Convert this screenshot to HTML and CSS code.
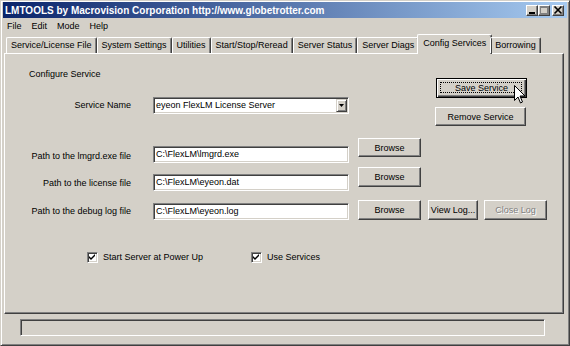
FILE: index.html
```html
<!DOCTYPE html>
<html>
<head>
  <title>LMTOOLS</title>
  <link rel="stylesheet" href="styles.css">
</head>
<body>
  <div class="window">
    <div class="titlebar">
      <span class="title">LMTOOLS by Macrovision Corporation http://www.globetrotter.com</span>
      <div class="caption-btns">
        <span class="cap-btn"><svg width="10" height="9" viewBox="0 0 10 9"><rect x="2" y="6" width="6" height="2" fill="#000"/></svg></span>
        <span class="cap-btn"><svg width="10" height="9" viewBox="0 0 10 9"><rect x="1.5" y="0.5" width="7" height="7" fill="none" stroke="#808080"/><rect x="1" y="0" width="8" height="2" fill="#808080"/></svg></span>
        <span class="cap-btn close"><svg width="10" height="9" viewBox="0 0 10 9"><path d="M1.5 0.5 L8.5 7.5 M8.5 0.5 L1.5 7.5" stroke="#000" stroke-width="1.6"/></svg></span>
      </div>
    </div>

    <div class="menubar">
      <span>File</span>
      <span>Edit</span>
      <span>Mode</span>
      <span>Help</span>
    </div>

    <div class="tabs">
      <div class="tab">Service/License File</div>
      <div class="tab">System Settings</div>
      <div class="tab">Utilities</div>
      <div class="tab">Start/Stop/Reread</div>
      <div class="tab">Server Status</div>
      <div class="tab">Server Diags</div>
      <div class="tab active">Config Services</div>
      <div class="tab">Borrowing</div>
    </div>

    <div class="panel">
      <div class="top">
        <div class="top-left">
          <div class="heading">Configure Service</div>
          <div class="service-row">
            <label class="field-label">Service Name</label>
            <div class="select">
              <span class="select-text">eyeon FlexLM License Server</span>
              <span class="drop-btn"><svg width="5" height="3" viewBox="0 0 5 3"><path d="M0 0 H5 L2.5 3 Z" fill="#000"/></svg></span>
            </div>
          </div>
        </div>
        <div class="top-right">
          <button class="btn default">Save Service</button>
          <button class="btn remove">Remove Service</button>
        </div>
      </div>

      <div class="path-row row-lmgrd">
        <label class="field-label">Path to the lmgrd.exe file</label>
        <div class="text-input">C:\FlexLM\lmgrd.exe</div>
        <button class="btn browse">Browse</button>
      </div>

      <div class="path-row row-license">
        <label class="field-label">Path to the license file</label>
        <div class="text-input">C:\FlexLM\eyeon.dat</div>
        <button class="btn browse">Browse</button>
      </div>

      <div class="path-row row-debug">
        <label class="field-label">Path to the debug log file</label>
        <div class="text-input">C:\FlexLM\eyeon.log</div>
        <button class="btn browse">Browse</button>
        <button class="btn view-log">View Log...</button>
        <button class="btn close-log" disabled>Close Log</button>
      </div>

      <div class="checks">
        <div class="check first">
          <span class="box"><svg width="7" height="7" viewBox="0 0 7 7"><path d="M0 2 L2 4 L6 0 L6 2 L2 6 L0 4 Z" fill="#000"/></svg></span>
          <span>Start Server at Power Up</span>
        </div>
        <div class="check">
          <span class="box"><svg width="7" height="7" viewBox="0 0 7 7"><path d="M0 2 L2 4 L6 0 L6 2 L2 6 L0 4 Z" fill="#000"/></svg></span>
          <span>Use Services</span>
        </div>
      </div>
    </div>

    <div class="statusbar">
      <div class="status-field"></div>
    </div>

    <svg class="cursor" width="12" height="19" viewBox="0 0 12 19">
      <path d="M0.5 0.5 L0.5 15.5 L4 12 L6.5 18 L8.5 17 L6 11 L11 11 Z" fill="#fff" stroke="#000" stroke-width="1"/>
    </svg>
  </div>
</body>
</html>
```

FILE: styles.css
```css
body {
  margin: 0;
  background-color: #d4d0c8;
  font-family: "Liberation Sans", Arial, sans-serif;
  font-size: 9px;
  color: #000;
}

.window {
  position: relative;
  width: 570px;
  height: 346px;
  box-sizing: border-box;
  border: 1px solid;
  border-color: #d4d0c8 #404040 #404040 #d4d0c8;
  box-shadow: inset 1px 1px #fff, inset -1px -1px #808080;
  padding: 1px 3px 3px 3px;
  background-color: #d4d0c8;
}

/* title bar */
.titlebar {
  margin: 0 -1px;
  height: 16px;
  display: flex;
  align-items: center;
  justify-content: space-between;
  background: linear-gradient(to right, #0a246a, #a6caf0);
  padding: 0 3px 0 2px;
}

.title {
  color: #fff;
  font-weight: bold;
  font-size: 10px;
}

.caption-btns {
  display: flex;
}

.cap-btn {
  width: 12px;
  height: 11px;
  box-sizing: border-box;
  display: flex;
  align-items: center;
  justify-content: center;
  background-color: #d4d0c8;
  border: 1px solid;
  border-color: #fff #404040 #404040 #fff;
  box-shadow: inset -1px -1px #808080;
}

.cap-btn.close {
  margin-left: 2px;
}

/* menu */
.menubar {
  height: 16px;
  display: flex;
  align-items: center;
  gap: 4px;
}

.menubar span {
  padding: 0 3px;
}

/* tabs */
.tabs {
  height: 19px;
  display: flex;
  align-items: flex-end;
  padding-left: 2px;
  position: relative;
  z-index: 1;
}

.tab {
  height: 16px;
  box-sizing: border-box;
  padding: 0 4px;
  line-height: 14px;
  border: 1px solid;
  border-bottom: none;
  border-color: #fff #404040 #404040 #fff;
  box-shadow: inset -1px 0 #808080;
  border-radius: 2px 2px 0 0;
  white-space: nowrap;
}

.tab.active {
  height: 20px;
  margin: 0 -2px -1px -2px;
  padding: 0 5px;
  line-height: 16px;
  background-color: #d4d0c8;
}

/* panel */
.panel {
  width: 560px;
  height: 261px;
  box-sizing: border-box;
  border: 1px solid;
  border-color: #fff #404040 #404040 #fff;
  box-shadow: inset -1px -1px #808080;
}

.top {
  display: flex;
  margin-bottom: 12px;
}

.top-left {
  width: 344px;
  padding-top: 15px;
}

.heading {
  line-height: 11px;
  padding-left: 24px;
}

.service-row {
  display: flex;
  align-items: center;
  margin-top: 17px;
}

.field-label {
  width: 126px;
  margin-right: 22px;
  text-align: right;
  line-height: 11px;
  white-space: nowrap;
}

.select,
.text-input {
  width: 196px;
  height: 17px;
  box-sizing: border-box;
  background-color: #fff;
  border: 1px solid;
  border-color: #808080 #fff #fff #808080;
  box-shadow: inset 1px 1px #404040, inset -1px -1px #d4d0c8;
  padding: 1px 2px 0 2px;
  line-height: 13px;
  white-space: nowrap;
}

.select {
  display: flex;
  justify-content: space-between;
  padding-right: 1px;
}

.drop-btn {
  width: 11px;
  height: 13px;
  box-sizing: border-box;
  display: flex;
  align-items: center;
  justify-content: center;
  background-color: #d4d0c8;
  border: 1px solid;
  border-color: #d4d0c8 #404040 #404040 #d4d0c8;
  box-shadow: inset 1px 1px #fff, inset -1px -1px #808080;
}

.top-right {
  display: flex;
  flex-direction: column;
  align-items: flex-start;
  padding-top: 24px;
  margin-left: 87px;
}

/* buttons */
.btn {
  font-family: inherit;
  font-size: 9px;
  color: #000;
  height: 19px;
  box-sizing: border-box;
  padding: 0;
  background-color: #d4d0c8;
  border: 1px solid;
  border-color: #fff #404040 #404040 #fff;
  box-shadow: inset -1px -1px #808080;
  position: relative;
}

.btn.default {
  width: 91px;
  height: 20px;
  border-color: #000;
  box-shadow: inset 1px 1px #fff, inset -1px -1px #404040, inset -2px -2px #808080;
}

.btn.default::after {
  content: "";
  position: absolute;
  left: 3px;
  top: 3px;
  right: 4px;
  bottom: 4px;
  border: 1px dotted #000;
}

.btn.remove {
  width: 91px;
  margin-top: 9px;
  margin-left: -1px;
}

.btn.browse {
  width: 63px;
  margin-left: 9px;
}

.btn.view-log {
  width: 50px;
  height: 20px;
  margin-left: 7px;
}

.btn.close-log {
  width: 63px;
  height: 20px;
  margin-left: 6px;
  color: #808080;
  text-shadow: 1px 1px #fff;
}

/* path rows */
.path-row {
  display: flex;
  align-items: flex-start;
}

.row-lmgrd .field-label { margin-top: 13px; }
.row-lmgrd .text-input { margin-top: 8px; }

.row-license { margin-top: 4px; }
.row-license .field-label { margin-top: 11px; }
.row-license .text-input { margin-top: 7px; }
.row-license .browse { height: 20px; }

.row-debug { margin-top: 9px; }
.row-debug .field-label { margin-top: 6px; }
.row-debug .text-input { margin-top: 3px; }
.row-debug .browse { height: 20px; }

/* checkboxes */
.checks {
  display: flex;
  margin-top: 32px;
  padding-left: 82px;
}

.check {
  display: flex;
  align-items: center;
  gap: 5px;
  line-height: 11px;
}

.check.first {
  width: 164px;
}

.box {
  width: 11px;
  height: 11px;
  box-sizing: border-box;
  display: flex;
  align-items: center;
  justify-content: center;
  background-color: #fff;
  border: 1px solid;
  border-color: #808080 #fff #fff #808080;
  box-shadow: inset 1px 1px #404040, inset -1px -1px #d4d0c8;
}

/* status bar */
.statusbar {
  padding: 5px 0 0 16px;
}

.status-field {
  width: 525px;
  height: 17px;
  box-sizing: border-box;
  border: 1px solid;
  border-color: #808080 #fff #fff #808080;
  box-shadow: inset 1px 1px #404040;
}

/* mouse pointer over the default button */
.cursor {
  position: absolute;
  left: 513px;
  top: 84px;
}
```
